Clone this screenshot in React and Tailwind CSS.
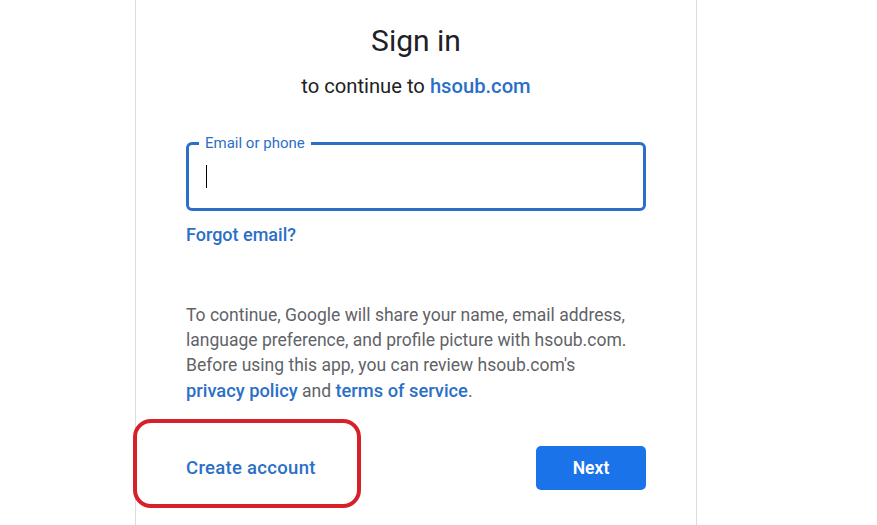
export default function App() {
  const blue = 'text-[#2b6fc7]'

  return (
    <div className="w-[877px] h-[525px] overflow-hidden bg-white font-['Roboto','Liberation_Sans',sans-serif]">
      <div className="ml-[135px] w-[562px] h-full border-x border-[#dadce0] px-[50px]">
        <h1 className="pt-[22px] text-center text-[30px] leading-[38px] font-normal text-[#202124]">Sign in</h1>
        <p className="mt-[12px] text-center text-[20.2px] leading-[28px] text-[#202124]">
          to continue to <span className={`font-medium ${blue}`}>hsoub.com</span>
        </p>

        <div className="relative mt-[42px] h-[69px] rounded-[6px] border-[3px] border-[#2b6fc7]">
          <span className="absolute left-[10px] top-[-12px] bg-white px-[6px] text-[15px] leading-[20px] text-[#2b6fc7]">
            Email or phone
          </span>
          <div className="absolute left-[17px] top-[20px] h-[23px] w-px bg-black" />
        </div>

        <p className={`mt-[12px] text-[18px] leading-[24px] font-medium ${blue}`}>Forgot email?</p>

        <p className="mt-[56px] whitespace-nowrap text-[17.5px] leading-[25px] text-[#5f6368]">
          To continue, Google will share your name, email address,
          <br />
          language preference, and profile picture with hsoub.com.
          <br />
          Before using this app, you can review hsoub.com's
          <br />
          <span className={`text-[18.3px] font-medium ${blue}`}>privacy policy</span> and{' '}
          <span className={`text-[18.3px] font-medium ${blue}`}>terms of service</span>.
        </p>

        <div className="mt-[42px] flex items-center justify-between">
          <div className="relative">
            <button className={`text-[18.5px] leading-[24px] font-medium tracking-[0.3px] ${blue}`}>Create account</button>
            <div className="pointer-events-none absolute left-[-53px] top-[-37px] h-[89px] w-[228px] rounded-[18px] border-4 border-[#d8202a]" />
          </div>
          <button className="h-[44px] w-[110px] rounded-[5px] bg-[#1a73e8] text-[17.5px] font-semibold text-white">Next</button>
        </div>
      </div>
    </div>
  )
}
